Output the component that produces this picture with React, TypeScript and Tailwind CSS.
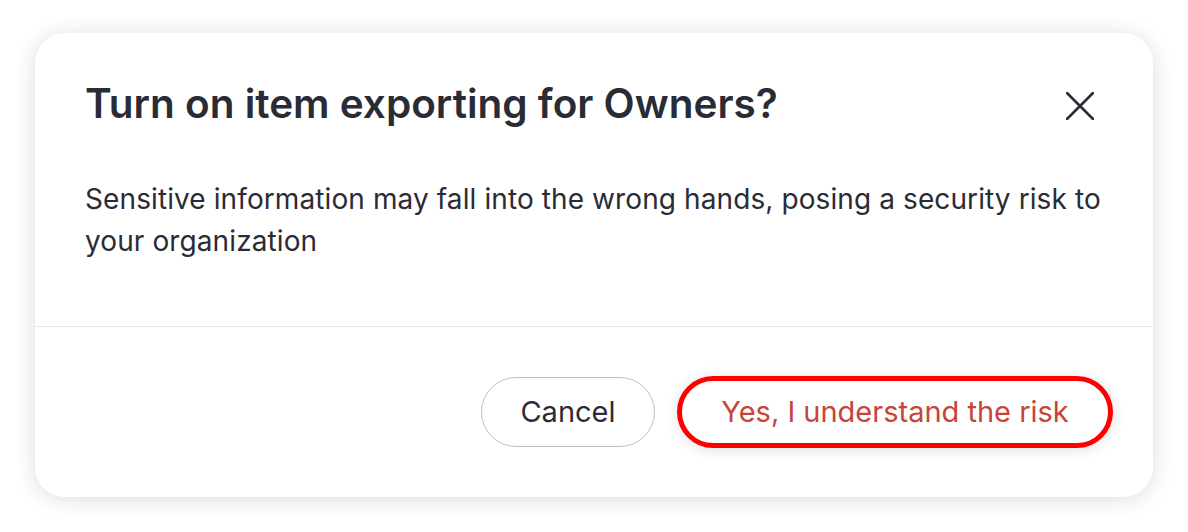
export default function App() {
  return (
    <div className="w-[1188px] h-[532px] bg-white pt-[33px] pl-[35px]" style={{ fontFamily: "Inter, 'Noto Sans', sans-serif" }}>
      <div className="w-[1118px] h-[464px] bg-white rounded-[30px] shadow-[0_2px_22px_rgba(0,0,0,0.14)] flex flex-col">
        <div className="flex items-start justify-between pl-[50px] pr-[59px] pt-[47px]">
          <h2 className="text-[40.5px] leading-[48px] font-semibold text-[#2a2c35]">
            Turn on item exporting for Owners?
          </h2>
          <button className="mt-[12px] text-[#2a2c35]">
            <svg width="28" height="28" viewBox="0 0 28 28" fill="none" stroke="currentColor" strokeWidth="2.6" strokeLinecap="round">
              <path d="M1 1L27 27M27 1L1 27" />
            </svg>
          </button>
        </div>
        <div className="pl-[50px] pr-[40px] pt-[50px] h-[198px]">
          <p className="text-[28px] leading-[42px] tracking-[0.1px] text-[#2a2c35]">
            Sensitive information may fall into the wrong hands, posing a security risk to your organization
          </p>
        </div>
        <div className="h-px bg-[#e6e7ea]" />
        <div className="flex-1 flex items-center justify-end gap-[22px] pr-[40px]">
          <button className="h-[70px] w-[174px] rounded-full border border-[#bdc0c9] text-[29px] text-[#2a2c35]">
            Cancel
          </button>
          <button className="h-[72px] w-[436px] rounded-full border-[5px] border-[#ff0000] text-[29px] text-[#c8443a] shadow-[0_2px_14px_rgba(0,0,0,0.12)]">
            Yes, I understand the risk
          </button>
        </div>
      </div>
    </div>
  );
}
